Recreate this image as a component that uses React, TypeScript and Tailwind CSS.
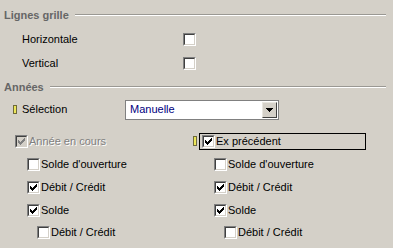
import React from "react";

const checkPath =
  "M6 0h1v1h-1z M5 1h2v1h-2z M0 2h1v1h-1z M4 2h3v1h-3z M0 3h2v1h-2z M3 3h3v1h-3z M0 4h5v1h-5z M1 5h3v1h-3z M2 6h1v1h-1z";

function Box({ checked = false, disabled = false }: { checked?: boolean; disabled?: boolean }) {
  return (
    <span className="flex h-[13px] w-[13px] shrink-0 border border-t-[#808080] border-l-[#808080] border-r-white border-b-white">
      <span
        className={`flex flex-1 items-center justify-center border border-t-[#404040] border-l-[#404040] border-r-[#d4d0c8] border-b-[#d4d0c8] ${
          disabled ? "bg-[#d4d0c8]" : "bg-white"
        }`}
      >
        {checked && (
          <svg width="7" height="7" viewBox="0 0 7 7" shapeRendering="crispEdges">
            <path d={checkPath} fill={disabled ? "#808080" : "#000"} />
          </svg>
        )}
      </span>
    </span>
  );
}

function Marker({ h }: { h: string }) {
  return <span className={`w-[4px] shrink-0 border border-[#6e6a3a] bg-[#ece65a] ${h}`} />;
}

function Group({ title }: { title: string }) {
  return (
    <div className="flex h-[24px] items-center pl-1 pr-[7px]">
      <span className="font-bold text-[#666]">{title}</span>
      <span className="ml-[6px] flex-1 border-t border-b border-t-[#9a9893] border-b-white" />
    </div>
  );
}

function Option({ label, checked, pad }: { label: string; checked?: boolean; pad: string }) {
  return (
    <div className={`flex items-center gap-[1px] ${pad}`}>
      <Box checked={checked} />
      <span>{label}</span>
    </div>
  );
}

const rows = [
  { label: "Solde d'ouverture", checked: false, left: "pl-[27px]", right: "pl-[21px]", h: "h-[24px]" },
  { label: "Débit / Crédit", checked: true, left: "pl-[27px]", right: "pl-[21px]", h: "h-[23px]" },
  { label: "Solde", checked: true, left: "pl-[27px]", right: "pl-[21px]", h: "h-[23px]" },
  { label: "Débit / Crédit", checked: false, left: "pl-[37px]", right: "pl-[31px]", h: "h-[21px]" },
];

export default function App() {
  return (
    <div className="h-[248px] w-[393px] overflow-hidden bg-[#d4d0c8] pt-[3px] font-['Liberation_Sans',Arial,sans-serif] text-[11px] text-black">
      <Group title="Lignes grille" />
      <div className="flex h-[24px] items-center pl-[22px]">
        <span className="w-[161px]">Horizontale</span>
        <Box />
      </div>
      <div className="flex h-[24px] items-center pl-[22px]">
        <span className="w-[161px]">Vertical</span>
        <Box />
      </div>
      <Group title="Années" />
      <div className="flex h-[21px] items-center pl-[13px]">
        <div className="flex w-[112px] items-center gap-[5px]">
          <Marker h="h-[9px]" />
          <span>Sélection</span>
        </div>
        <div className="flex h-[20px] w-[154px] items-center border border-[#808080] bg-white pl-[4px] pr-[1px]">
          <span className="flex-1 text-[#000080]">Manuelle</span>
          <span className="flex h-[16px] w-[15px] items-center justify-center border border-t-[#e8e6e0] border-l-[#e8e6e0] border-r-[#404040] border-b-[#404040] bg-[#d4d0c8]">
            <svg width="7" height="4" viewBox="0 0 7 4" shapeRendering="crispEdges">
              <path d="M0 0h7v1h-7z M1 1h5v1h-5z M2 2h3v1h-3z M3 3h1v1h-1z" fill="#000" />
            </svg>
          </span>
        </div>
      </div>
      <div className="mt-[10px] flex h-[22px] items-center">
        <div className="flex w-[193px] items-center gap-[1px] pl-[15px]">
          <Box checked disabled />
          <span className="text-[#808080] [text-shadow:1px_1px_0_#fff]">Année en cours</span>
        </div>
        <div className="flex items-center gap-[2px]">
          <Marker h="h-[10px]" />
          <div className="flex h-[17px] w-[167px] items-center gap-[1px] border border-black pl-[2px]">
            <Box checked />
            <span>Ex précédent</span>
          </div>
        </div>
      </div>
      {rows.map((r, i) => (
        <div key={i} className={`flex items-center ${r.h}`}>
          <div className="w-[193px]">
            <Option label={r.label} checked={r.checked} pad={r.left} />
          </div>
          <Option label={r.label} checked={r.checked} pad={r.right} />
        </div>
      ))}
    </div>
  );
}
